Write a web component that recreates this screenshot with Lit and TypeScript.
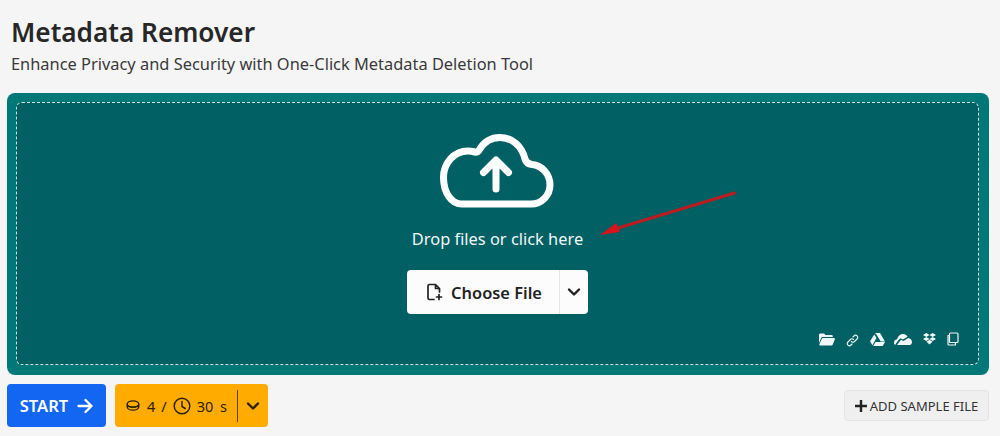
import { LitElement, html, css, svg } from "lit";
import { customElement } from "lit/decorators.js";

const chevron = svg`<path d="M3 5.500l5 5 5-5" fill="none" stroke="currentColor" stroke-width="2.400" stroke-linecap="round" stroke-linejoin="round"/>`;

@customElement("app-root")
export class AppRoot extends LitElement {
  static styles = css`
    :host {
      display: block;
      width: 1000px;
      height: 436px;
      overflow: hidden;
      background: #f5f5f5;
      font-family: "Noto Sans", "Open Sans", sans-serif;
      color: #2b2b2b;
    }
    .page {
      display: flex;
      flex-direction: column;
      padding: 14px 11px 0 7px;
    }
    h1 {
      margin: 0 0 0 4px;
      font-size: 26.2px;
      line-height: 36px;
      font-weight: 600;
      color: #272727;
    }
    .sub {
      margin: 3px 0 0 4px;
      font-size: 16.4px;
      line-height: 22px;
      color: #3a3a3a;
    }
    .drop {
      position: relative;
      margin-top: 18px;
      height: 282px;
      box-sizing: border-box;
      padding: 9px 10px 10px 9px;
      background: #007878;
      border-radius: 8px;
    }
    .inner {
      height: 100%;
      box-sizing: border-box;
      background: #006064;
      border: 1px dashed #cfe3e3;
      border-radius: 6px;
      display: flex;
      flex-direction: column;
      align-items: center;
      padding-top: 31px;
      position: relative;
    }
    .cloud {
      display: block;
      margin-left: -1px;
    }
    .hint {
      margin-top: 20px;
      font-size: 16.4px;
      line-height: 22px;
      color: #f1f7f7;
    }
    .choose {
      margin-top: 20px;
      height: 44px;
      display: flex;
      background: #fcfcfc;
      border-radius: 4px;
      color: #222;
    }
    .choose .main {
      width: 153px;
      padding-left: 2px;
      box-sizing: border-box;
      display: flex;
      align-items: center;
      justify-content: center;
      gap: 8px;
      font-size: 16.4px;
      font-weight: 600;
      border-right: 1px solid #e6e6e6;
    }
    .choose .more {
      width: 28px;
      display: flex;
      align-items: center;
      justify-content: center;
    }
    .sources {
      position: absolute;
      right: 19px;
      bottom: 17px;
      display: flex;
      align-items: center;
      gap: 11px;
      color: #f2f7f7;
    }
    .arrow {
      position: absolute;
      left: 590px;
      top: 97px;
    }
    .actions {
      margin-top: 9px;
      display: flex;
      align-items: center;
    }
    .start {
      width: 99px;
      height: 43px;
      display: flex;
      align-items: center;
      justify-content: center;
      gap: 9px;
      box-sizing: border-box;
      background: #1266f1;
      color: #fff;
      border-radius: 4px;
      font-size: 16.5px;
      font-weight: 600;
    }
    .credits {
      margin-left: 9px;
      width: 153px;
      height: 43px;
      box-sizing: border-box;
      padding-left: 11px;
      display: flex;
      align-items: center;
      background: #ffab00;
      color: #2a2208;
      border-radius: 4px;
      font-size: 14.5px;
    }
    .credits .num {
      margin: 0 6px 0 7px;
    }
    .credits .val {
      margin-left: 6px;
      word-spacing: 3px;
    }
    .credits .split {
      margin-left: 10px;
      width: 1px;
      height: 32px;
      background: #5a4300;
    }
    .credits .caret {
      flex: 1;
      display: flex;
      justify-content: center;
    }
    .sample {
      margin-left: auto;
      width: 145px;
      height: 31px;
      box-sizing: border-box;
      display: flex;
      align-items: center;
      justify-content: center;
      gap: 3px;
      background: #efefef;
      border: 1px solid #e4e4e4;
      border-radius: 4px;
      font-size: 13px;
      color: #333;
    }
  `;

  render() {
    return html`
      <div class="page">
        <h1>Metadata Remover</h1>
        <p class="sub">Enhance Privacy and Security with One-Click Metadata Deletion Tool</p>
        <div class="drop">
          <div class="inner">
            <svg class="cloud" width="114" height="74" viewBox="0 0 114 74" fill="none" stroke="#fff" stroke-width="7" stroke-linecap="round" stroke-linejoin="round">
              <path d="M22 70H91C101.500 70 110 61.500 110 51C110 40 102 31.500 92 30.500C88 30 86 28.500 85 25C82 12 72 3.500 60 3.500C51 3.500 44 8 39.500 15.500C38.500 17.500 37 18.500 35 18C33 17.500 31 17 28 17C14 17 3.500 29 3.500 43.500C3.500 58 11 70 22 70Z"/>
              <path d="M56 55V27M43.500 38.500L56 26L68.500 38.500"/>
            </svg>
            <div class="hint">Drop files or click here</div>
            <div class="choose">
              <div class="main">
                <svg width="17" height="18" viewBox="0 0 17 18" fill="none" stroke="#222" stroke-width="1.700" stroke-linecap="round" stroke-linejoin="round">
                  <path d="M8 16.500H3.500C2.500 16.500 2 16 2 15V3C2 2 2.500 1.500 3.500 1.500H9.500L13.500 5.500V9M9.500 1.500V5.500H13.500M13 11.500V16.500M10.500 14H15.500"/>
                </svg>
                <span>Choose File</span>
              </div>
              <div class="more"><svg width="16" height="16" viewBox="0 0 16 16">${chevron}</svg></div>
            </div>
            <div class="sources">
              <svg width="16" height="13" viewBox="0 0 16 13" fill="currentColor"><path d="M0 2C0 1 .6.500 1.500.500H5L6.500 2H12.500C13.300 2 13.800 2.500 13.800 3.300V4H4C3 4 2.500 4.400 2.100 5.200L0 10ZM4 5H15C15.800 5 16.200 5.600 15.900 6.300L13.800 11.500C13.500 12.200 13 12.500 12.300 12.500H1C.4 12.500 .1 12 .3 11.500L2.700 5.900C3 5.300 3.400 5 4 5Z"/></svg>
              <svg width="13" height="13" viewBox="0 0 13 13" fill="none" stroke="currentColor" stroke-width="1.100" stroke-linecap="round" style="margin-top:3px"><path d="M5.500 7.500C6.500 8.500 7.700 8.300 8.500 7.500L11 5C12 4 12 2.700 11.100 1.900C10.200 1 9 1 8 2L7 3M7.500 5.500C6.500 4.500 5.300 4.700 4.500 5.500L2 8C1 9 1 10.300 1.900 11.100C2.800 12 4 12 5 11L6 10"/></svg>
              <svg width="15" height="13" viewBox="0 0 15 13" fill="currentColor"><path d="M5 0H10L15 8.500H10.700L6.500 1.500ZM4.300 1.500L6.500 5L2.400 12.300L0 8.200ZM5.500 9H15L12.700 13H3.200Z"/></svg>
              <svg width="18" height="12" viewBox="0 0 18 12" fill="currentColor" style="margin-left:-2px"><path d="M1 12C.2 11.300 0 10.500 0 9.500C0 7.800 1 6.500 3 6.200C4 3 6.200 1 9 1C11 1 12.500 2 13.500 3.800L9 6.500L6.500 5.200C4.500 6.500 3 9 1 12ZM3 12L7 6.800L9.500 8L14.200 5C16.300 5.200 18 7 18 9C18 10.500 17.300 11.500 16 12Z"/></svg>
              <svg width="13" height="12" viewBox="0 0 13 12" fill="currentColor"><path d="M3.400 0L6.500 2L3.400 4L0 2ZM9.600 0L13 2L9.600 4L6.500 2ZM0 6L3.400 4L6.500 6L3.400 8ZM9.600 4L13 6L9.600 8L6.500 6ZM3.500 8.700L6.500 6.800L9.500 8.700L6.500 11.500Z"/></svg>
              <svg width="12" height="14" viewBox="0 0 12 14" fill="none" stroke="currentColor" stroke-width="1.200" stroke-linejoin="round"><path d="M3.500 1H10C10.600 1 11 1.400 11 2V9.500C11 10.100 10.600 10.500 10 10.500H3.500C2.900 10.500 2.500 10.100 2.500 9.500V2C2.500 1.400 2.900 1 3.500 1ZM2.500 3.500H1V12C1 12.600 1.400 13 2 13H8.500V10.500"/></svg>
            </div>
          </div>
          <svg class="arrow" width="142" height="50" viewBox="0 0 142 50">
            <path d="M137.500 3L16 39.500" stroke="#bb1c20" stroke-width="3" stroke-linecap="round"/>
            <path d="M3 45L19 33L23 42Z" fill="#d5141b"/>
          </svg>
        </div>
        <div class="actions">
          <div class="start">
            <span>START</span>
            <svg width="16" height="16" viewBox="0 0 16 16" fill="none" stroke="#fff" stroke-width="2.300" stroke-linecap="round" stroke-linejoin="round"><path d="M1.500 8H14M8.500 2L14.500 8L8.500 14"/></svg>
          </div>
          <div class="credits">
            <svg width="14" height="11" viewBox="0 0 14 11" fill="none" stroke="currentColor" stroke-width="1.300"><ellipse cx="7" cy="4" rx="5.800" ry="3.200"/><path d="M1.200 4V7C1.200 8.800 3.800 10.200 7 10.200S12.800 8.800 12.800 7V4M1.500 5.800C3 7.500 11 7.500 12.500 5.800"/></svg>
            <span class="num">4</span><span>/</span>
            <svg width="18" height="18" viewBox="0 0 18 18" fill="none" stroke="currentColor" stroke-width="1.500" stroke-linecap="round" style="margin-left:6px"><circle cx="9" cy="9" r="7.800"/><path d="M9 4.500V9.500L12.200 11.500"/></svg>
            <span class="val">30 s</span>
            <span class="split"></span>
            <span class="caret"><svg width="16" height="16" viewBox="0 0 16 16">${chevron}</svg></span>
          </div>
          <div class="sample">
            <svg width="12" height="12" viewBox="0 0 12 12" fill="none" stroke="#222" stroke-width="2.400"><path d="M6 0V12M0 6H12"/></svg>
            <span>ADD SAMPLE FILE</span>
          </div>
        </div>
      </div>
    `;
  }
}
